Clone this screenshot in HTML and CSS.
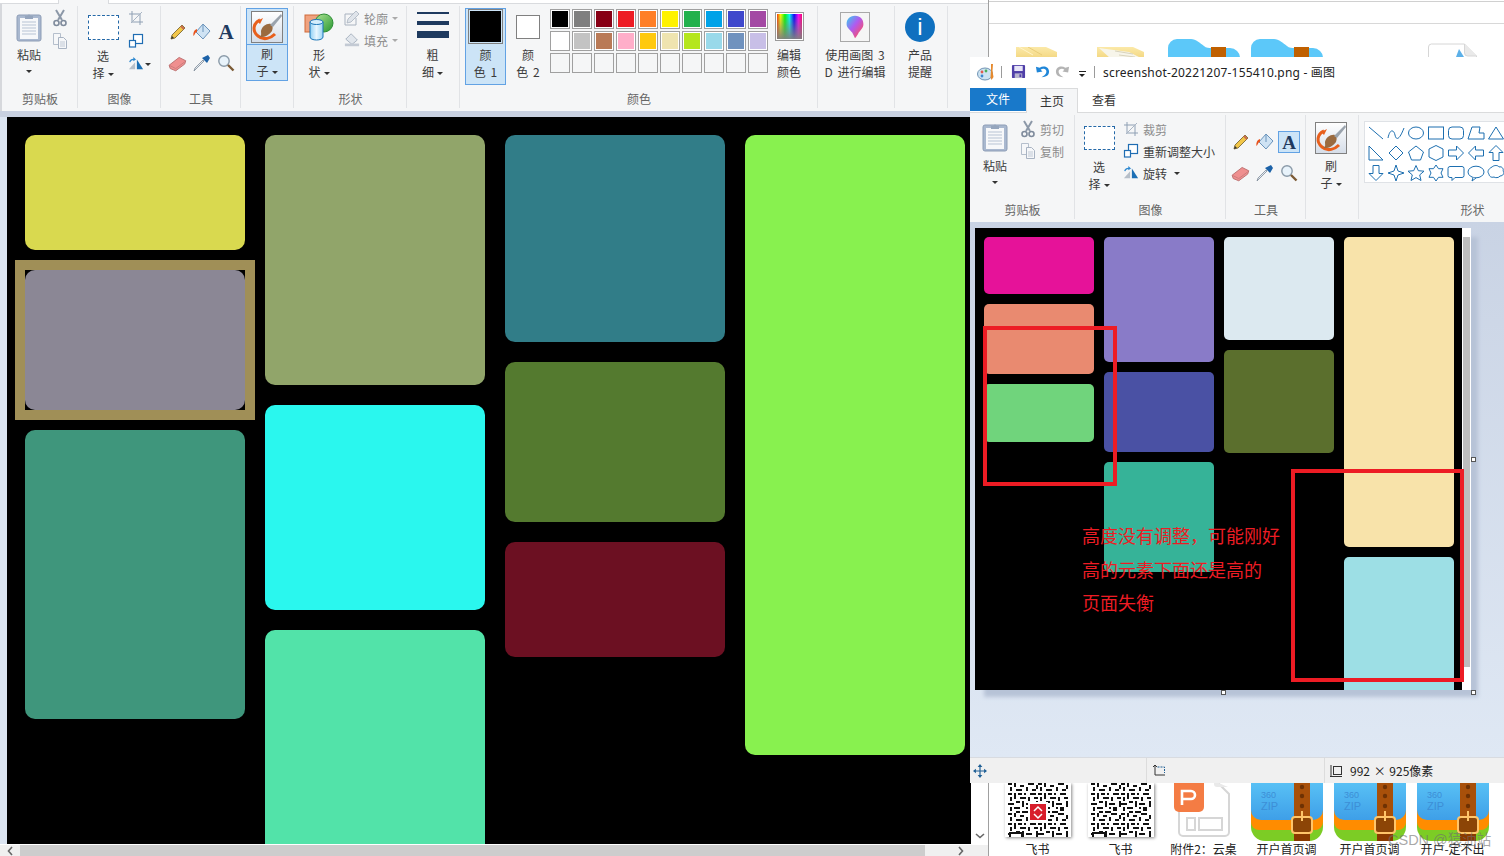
FILE: index.html
```html
<!DOCTYPE html>
<html lang="zh">
<head>
<meta charset="utf-8">
<title>画图</title>
<link rel="stylesheet" href="styles.css">
</head>
<body>
<svg class="defs" width="0" height="0">
  <defs>
    <linearGradient id="gPaper" x1="0" y1="0" x2="0" y2="1"><stop offset="0" stop-color="#fff"/><stop offset="1" stop-color="#d5dde8"/></linearGradient>
    <linearGradient id="gYellow" x1="0" y1="0" x2="0" y2="1"><stop offset="0" stop-color="#fbe9a8"/><stop offset="1" stop-color="#f3d67f"/></linearGradient>
    <linearGradient id="gCyl" x1="0" y1="0" x2="1" y2="0"><stop offset="0" stop-color="#8fd0f5"/><stop offset=".5" stop-color="#e8f6fe"/><stop offset="1" stop-color="#9bd4f4"/></linearGradient>
    <linearGradient id="gGreen" x1="0" y1="0" x2="1" y2="1"><stop offset="0" stop-color="#b0e596"/><stop offset="1" stop-color="#26962f"/></linearGradient>
    <linearGradient id="gDrop" x1="0" y1="0" x2="1" y2="1"><stop offset="0" stop-color="#2fd3f0"/><stop offset=".45" stop-color="#b05af0"/><stop offset=".8" stop-color="#f0507a"/><stop offset="1" stop-color="#f8a020"/></linearGradient>
    <linearGradient id="gZip" x1="0" y1="0" x2="0" y2="1"><stop offset="0" stop-color="#62cdfa"/><stop offset="1" stop-color="#3e9fe8"/></linearGradient>
    <pattern id="qrTile" width="30" height="30" patternUnits="userSpaceOnUse">
      <path d="M0 0h4v2H0zM6 0h2v4H6zM12 2h4v2h-4zM20 0h6v2h-6zM28 2h2v4h-2zM2 4h2v4H2zM8 6h6v2H8zM18 4h2v4h-2zM24 6h4v2h-4zM0 10h4v2H0zM6 10h2v6H6zM10 10h4v2h-4zM16 10h2v2h-2zM22 10h6v2h-6zM2 14h2v4H2zM12 14h6v2h-6zM20 14h2v4h-2zM26 14h4v2h-4zM0 20h6v2H0zM8 18h4v2H8zM14 18h2v6h-2zM18 20h6v2h-6zM28 18h2v6h-2zM2 24h2v4H2zM6 24h6v2H6zM18 24h2v2h-2zM22 24h4v4h-4zM8 28h4v2H8zM14 28h6v2h-6z" fill="#111"/>
    </pattern>

    <symbol id="i-paste" viewBox="0 0 26 30"><rect x="1" y="3" width="24" height="26" rx="2" fill="#a9b8cf" stroke="#8d9db6"/><rect x="4" y="6" width="18" height="21" fill="#f7f8fa"/><path d="M6 10h14M6 13h14M6 16h14M6 19h14M6 22h14" stroke="#b7c3d4"/><path d="M9 4h2.500a1.500 1.500 0 0 1 3 0H17v3H9z" fill="#95a5bd"/></symbol>
    <symbol id="i-cut" viewBox="0 0 16 18"><path d="M4 1l6 10M12 1L6 11" stroke="#8c98a8" stroke-width="2"/><circle cx="4.500" cy="14" r="2.500" fill="none" stroke="#7f8b9c" stroke-width="1.600"/><circle cx="11.500" cy="14" r="2.500" fill="none" stroke="#7f8b9c" stroke-width="1.600"/></symbol>
    <symbol id="i-copy" viewBox="0 0 16 18"><path d="M1.500 1.500h7v11h-7z" fill="#f6f7f9" stroke="#b5bfcc"/><path d="M6.500 5.500h5l3 3v8h-8z" fill="#f6f7f9" stroke="#a8b3c2"/><path d="M8 10h5M8 12h5M8 14h5" stroke="#c0c9d5"/></symbol>
    <symbol id="i-crop" viewBox="0 0 16 16"><path d="M4 1v11h11M1 4h11v11" fill="none" stroke="#8fa0b4"/><path d="M3 13L14 2" stroke="#a9b5c4"/></symbol>
    <symbol id="i-resize" viewBox="0 0 16 16"><rect x="5.500" y="1.500" width="9" height="9" fill="#fff" stroke="#1f6db3" stroke-width="1.200"/><rect x="1.500" y="7.500" width="6" height="6.500" fill="#fff" stroke="#1f6db3" stroke-width="1.200"/></symbol>
    <symbol id="i-rotate" viewBox="0 0 18 16"><path d="M1 14L8 6v8z" fill="#b6bfc9"/><path d="M10 3v11h7z" fill="#1b6fb5"/><path d="M2 6a4 4 0 0 1 5-3" fill="none" stroke="#2d88d0" stroke-width="1.500"/><path d="M6 0l3 3-3 2z" fill="#2d88d0"/></symbol>
    <symbol id="i-pencil" viewBox="0 0 18 18"><path d="M13 2l3 3L6 15l-4 1 1-4z" fill="#f2c648" stroke="#7d6a36" stroke-width=".9"/><path d="M12 3l3 3" stroke="#c76b50" stroke-width="2"/><path d="M2 16l1-3 2 2z" fill="#333"/></symbol>
    <symbol id="i-fill" viewBox="0 0 20 18"><path d="M11 1l7 7-7 8-7-7z" fill="#cfe3f4" stroke="#6b94bb"/><path d="M11 2v7" stroke="#6b94bb"/><path d="M5 6C2 7 1 10 1.500 13 3 12 3 9 5 9z" fill="#e8541d"/></symbol>
    <symbol id="i-a" viewBox="0 0 18 16"><text x="9" y="14.500" text-anchor="middle" class="serif-a">A</text></symbol>
    <symbol id="i-eraser" viewBox="0 0 18 16"><path d="M1 10L10 3l6 3-1 3-8 6-5-2z" fill="#ef8f8f" stroke="#b86a6a" stroke-width=".8"/><path d="M1 10l6 3 8-6" fill="none" stroke="#c97a7a" stroke-width=".8"/></symbol>
    <symbol id="i-picker" viewBox="0 0 18 18"><path d="M11 7l-8 8-2 2 1-3 8-8z" fill="#e4eaf0" stroke="#7d8a98" stroke-width=".8"/><path d="M9 4l5 5 3-5-2-3z" fill="#1c62a8"/></symbol>
    <symbol id="i-mag" viewBox="0 0 18 18"><circle cx="7" cy="7" r="5.200" fill="#e8f3fb" stroke="#8a9aa8" stroke-width="1.400"/><path d="M11 11l5.500 5.500" stroke="#7b5a35" stroke-width="2.400"/></symbol>
    <symbol id="i-brush" viewBox="0 0 32 32"><rect x=".5" y=".5" width="31" height="31" fill="url(#gPaper)" stroke="#808080"/><path d="M9 9C2 12 1 20 7 25s13 2 17-2" fill="none" stroke="#e85f1c" stroke-width="3"/><path d="M6 10l6-3-3 6z" fill="#e85f1c"/><path d="M10 20c1-5 6-8 10-7 2 1 2 4 1 7-3 4-8 7-13 6 3-1 2-3 2-6z" fill="#9a6a3f"/><path d="M19 14L30 3l1 2-9 11z" fill="#9aa3ad"/></symbol>
    <symbol id="i-shapes" viewBox="0 0 30 30"><rect x="1" y="3" width="16" height="17" fill="#f0a27f" stroke="#d06a3a"/><circle cx="20" cy="11" r="9" fill="url(#gGreen)" stroke="#2c8f35"/><path d="M6 10v15c0 4 13 4 13 0V10z" fill="url(#gCyl)" stroke="#1c76b8"/><ellipse cx="12.500" cy="10" rx="6.500" ry="2.500" fill="#d5eefc" stroke="#1c76b8"/></symbol>
    <symbol id="i-outline" viewBox="0 0 16 16"><path d="M1 15V4h8" fill="none" stroke="#a8b2bf"/><path d="M1 15h11V8" fill="none" stroke="#a8b2bf"/><path d="M12 1l3 3-8 8-4 1 1-4z" fill="#dfe4ea" stroke="#a8b2bf" stroke-width=".8"/></symbol>
    <symbol id="i-fillsm" viewBox="0 0 18 16"><path d="M8 1l7 7-6 5-7-6z" fill="#e1e6ec" stroke="#a4afbc"/><path d="M1 12h16v3H1z" fill="#c3cad4"/></symbol>
    <symbol id="i-save" viewBox="0 0 16 16"><rect x="1" y="1" width="14" height="14" rx="1" fill="#4f3fa8"/><rect x="3.500" y="2" width="9" height="5.500" fill="#e7e5f7"/><rect x="4" y="10" width="8" height="5" fill="#b9b6cf"/><rect x="9" y="11" width="2" height="3" fill="#4f3fa8"/></symbol>
    <symbol id="i-undo" viewBox="0 0 16 16"><path d="M1 3l1 6 6-1-2-2c3-2 7 0 6 3-.5 2-3 4-5 5 5 0 8-2 8-6 0-5-6-7-10-4z" fill="#1f86d8"/></symbol>
    <symbol id="i-appicon" viewBox="0 0 18 18"><ellipse cx="8" cy="11" rx="7.500" ry="6" fill="#cde3f2" stroke="#6f93b3"/><circle cx="5" cy="9" r="1.400" fill="#e25b4f"/><circle cx="9" cy="8" r="1.400" fill="#4dae58"/><circle cx="5" cy="13" r="1.400" fill="#3c89d0"/><path d="M14 1h2l-.5 7 1 6-2 3-1-3 .5-6z" fill="#e68a2e"/></symbol>
    <symbol id="i-move" viewBox="0 0 12 12"><path d="M6 0l2 2.500H6.500v3h3V4L12 6 9.500 8V6.500h-3v3H8L6 12 4 9.500h1.500v-3h-3V8L0 6l2.500-2v1.500h3v-3H4z" fill="#1f5f95"/></symbol>
    <symbol id="i-selsize" viewBox="0 0 14 14"><path d="M3 1v10h10" fill="none" stroke="#333"/><path d="M5.500 3h7v6" fill="none" stroke="#1f5f95" stroke-dasharray="2 1"/><path d="M1 3l2-2 2 2" fill="none" stroke="#333"/></symbol>
    <symbol id="i-imgsize" viewBox="0 0 14 14"><rect x="4.500" y="2.500" width="8" height="8" fill="none" stroke="#333"/><path d="M2 1v12M1 12.500h12" stroke="#333"/></symbol>
    <symbol id="i-chev-l" viewBox="0 0 8 10"><path d="M6 1L2.500 5 6 9" fill="none" stroke="#666" stroke-width="1.600"/></symbol>
    <symbol id="i-chev-r" viewBox="0 0 8 10"><path d="M2 1l3.500 4L2 9" fill="none" stroke="#666" stroke-width="1.600"/></symbol>
    <symbol id="i-chev-d" viewBox="0 0 10 8"><path d="M1 2l4 3.500L9 2" fill="none" stroke="#666" stroke-width="1.600"/></symbol>

    <symbol id="s-line" viewBox="0 0 18 18"><path d="M2 3l14 12"/></symbol>
    <symbol id="s-curve" viewBox="0 0 18 18"><path d="M1 14c2-10 6-8 7-3s4 6 9-7"/></symbol>
    <symbol id="s-oval" viewBox="0 0 18 18"><ellipse cx="9" cy="9" rx="7.500" ry="6"/></symbol>
    <symbol id="s-rect" viewBox="0 0 18 18"><rect x="1.500" y="3" width="15" height="12"/></symbol>
    <symbol id="s-rrect" viewBox="0 0 18 18"><rect x="1.500" y="3" width="15" height="12" rx="3.500"/></symbol>
    <symbol id="s-poly" viewBox="0 0 18 18"><path d="M1 15L5 3h8l-1 6h5v6z"/></symbol>
    <symbol id="s-tri" viewBox="0 0 18 18"><path d="M9 3l7.500 12h-15z"/></symbol>
    <symbol id="s-rtri" viewBox="0 0 18 18"><path d="M2 2v14h14z"/></symbol>
    <symbol id="s-dia" viewBox="0 0 18 18"><path d="M9 2l7 7-7 7-7-7z"/></symbol>
    <symbol id="s-pent" viewBox="0 0 18 18"><path d="M9 2l7.500 6-3 8h-9l-3-8z"/></symbol>
    <symbol id="s-hex" viewBox="0 0 18 18"><path d="M9 1.500l7 3.500v8l-7 3.500L2 13V5z"/></symbol>
    <symbol id="s-ar" viewBox="0 0 18 18"><path d="M1.500 6h8V2l7 7-7 7v-4h-8z"/></symbol>
    <symbol id="s-al" viewBox="0 0 18 18"><path d="M16.500 6h-8V2l-7 7 7 7v-4h8z"/></symbol>
    <symbol id="s-au" viewBox="0 0 18 18"><path d="M6 16.500v-8H2l7-7 7 7h-4v8z"/></symbol>
    <symbol id="s-ad" viewBox="0 0 18 18"><path d="M6 1.500v8H2l7 7 7-7h-4v-8z"/></symbol>
    <symbol id="s-s4" viewBox="0 0 18 18"><path d="M9 1l2 6 6 2-6 2-2 6-2-6-6-2 6-2z"/></symbol>
    <symbol id="s-s5" viewBox="0 0 18 18"><path d="M9 1.500l2.300 5.200 5.700.5-4.300 3.700 1.300 5.600L9 13.600l-5 2.900 1.300-5.600L1 7.200l5.700-.5z"/></symbol>
    <symbol id="s-s6" viewBox="0 0 18 18"><path d="M9 1l2.500 3.700H16l-2 4.300 2 4.300h-4.500L9 17l-2.500-3.700H2L4 9 2 4.700h4.500z"/></symbol>
    <symbol id="s-cr" viewBox="0 0 18 18"><path d="M3 2.500h12a2 2 0 0 1 2 2v7a2 2 0 0 1-2 2H8l-3 3v-3H3a2 2 0 0 1-2-2v-7a2 2 0 0 1 2-2z"/></symbol>
    <symbol id="s-co" viewBox="0 0 18 18"><ellipse cx="9" cy="8" rx="8" ry="5.800"/><path d="M6 13.500L5 17l4-3"/></symbol>
    <symbol id="s-cc" viewBox="0 0 18 18"><path d="M5 3c2-2 6-2 7 0 3-1 5 2 4 4 2 2 0 5-3 5-1 2-5 2-6 1-3 1-5-1-5-3-2-2-1-5 3-7z"/></symbol>

    <symbol id="f-manila" viewBox="0 0 44 12"><path d="M0 0h30l11 5v7H0z" fill="url(#gYellow)"/><path d="M3 0l14 8" stroke="#fff3c8"/><path d="M12 0l14 8" stroke="#e8cc78"/></symbol>
    <symbol id="f-manila2" viewBox="0 0 48 12"><path d="M0 0h36l11 5v7H0z" fill="url(#gYellow)"/><path d="M2 1l30 4 14 7H14z" fill="#f7f5ea"/><path d="M18 4l18 3M22 8l16 2" stroke="#d8d3bc"/></symbol>
    <symbol id="f-blue" viewBox="0 0 72 20"><path d="M0 20V9a9 9 0 0 1 9-9h14c5 0 9 4 13 7 2 2 5 2 8 2h18a10 10 0 0 1 10 10v1z" fill="#5cc8f9"/><rect x="43" y="8" width="15" height="12" fill="#c06000"/></symbol>
    <symbol id="f-doc" viewBox="0 0 49 14"><path d="M.5 14V4a3 3 0 0 1 3-3h33l12 12v1" fill="#fff" stroke="#d6d6d6"/><path d="M36.500 1v9a3 3 0 0 0 3 3h9" fill="#e9e9e9" stroke="#d6d6d6"/><path d="M28 14l3-8 5 8z" fill="#5cb0e8"/></symbol>
    <symbol id="f-zip" viewBox="0 0 72 72"><path d="M0 14a14 14 0 0 1 14-14h44a14 14 0 0 1 14 14v44a14 14 0 0 1-14 14H14A14 14 0 0 1 0 58z" fill="#7ccc25"/><path d="M0 14a14 14 0 0 1 14-14h44a14 14 0 0 1 14 14v39a8 8 0 0 1-8 8H8a8 8 0 0 1-8-8z" fill="#ff8c00"/><path d="M0 14a14 14 0 0 1 14-14h44a14 14 0 0 1 14 14v27a10 10 0 0 1-10 10H10A10 10 0 0 1 0 41z" fill="url(#gZip)"/><text x="10" y="29" class="zip-a">360</text><text x="10" y="41" class="zip-b">ZIP</text><rect x="43" width="16" height="72" fill="#a8500a"/><rect x="43" y="60" width="16" height="12" fill="#8a3a00"/><circle cx="51" cy="18" r="2.200" fill="#6e3204"/><circle cx="51" cy="27" r="2.200" fill="#6e3204"/><circle cx="51" cy="37" r="2.200" fill="#6e3204"/><rect x="41" y="48" width="20" height="16" rx="3" fill="#8c4506" stroke="#ffc56a" stroke-width="2"/><path d="M51 42v10" stroke="#ffc56a" stroke-width="2"/></symbol>
    <symbol id="f-ppt" viewBox="0 0 56 54"><path d="M5 -4h35l15 15v38a4 4 0 0 1-4 4H9a4 4 0 0 1-4-4z" fill="#fff" stroke="#d6d6d6" stroke-width="2"/><path d="M40 -2v3a3 3 0 0 0 3 3h11" fill="#e9e9e9"/><path d="M0 -6h30v30a5 5 0 0 1-5 5H5a5 5 0 0 1-5-5z" fill="#f47c44"/><path d="M8 22V8h9a4 4 0 0 1 0 8H8" fill="none" stroke="#fff" stroke-width="2.600"/><rect x="13" y="35" width="8" height="12" fill="none" stroke="#d6d6d6" stroke-width="2"/><rect x="25" y="35" width="23" height="12" fill="none" stroke="#d6d6d6" stroke-width="2"/></symbol>
  </defs>
</svg>

<main class="desktop">

  <section class="explorer">
    <div class="exp-top"></div>
    <div class="exp-addr"></div>
    <div class="exp-row exp-row-top">
      <div class="exp-cell"><svg class="folder-manila"><use href="#f-manila"/></svg></div>
      <div class="exp-cell"><svg class="folder-manila f2"><use href="#f-manila2"/></svg></div>
      <div class="exp-cell"><svg class="folder-blue"><use href="#f-blue"/></svg></div>
      <div class="exp-cell"><svg class="folder-blue"><use href="#f-blue"/></svg></div>
      <div class="exp-cell"></div>
      <div class="exp-cell"><svg class="doc-top"><use href="#f-doc"/></svg></div>
    </div>
    <div class="exp-row exp-row-bottom">
      <figure class="exp-item">
        <div class="qr"><svg viewBox="0 0 60 66"><rect width="60" height="66" fill="url(#qrTile)"/><rect x="2" y="50" width="12" height="12" fill="#fff" stroke="#111" stroke-width="2"/><rect x="6" y="54" width="4" height="4" fill="#111"/><rect x="20" y="19" width="20" height="20" fill="#fff"/><rect x="22" y="21" width="16" height="16" fill="#d81e2c"/><path d="M26 28l4-4 4 4M26 31l4 4 4-4" stroke="#fff" fill="none" stroke-width="1.500"/></svg></div>
        <figcaption>飞书</figcaption>
      </figure>
      <figure class="exp-item">
        <div class="qr"><svg viewBox="0 0 60 66"><rect width="60" height="66" fill="url(#qrTile)"/><rect x="2" y="50" width="12" height="12" fill="#fff" stroke="#111" stroke-width="2"/><rect x="6" y="54" width="4" height="4" fill="#111"/></svg></div>
        <figcaption>飞书</figcaption>
      </figure>
      <figure class="exp-item"><svg class="ppt"><use href="#f-ppt"/></svg><figcaption>附件2：云桌</figcaption></figure>
      <figure class="exp-item"><svg class="zip"><use href="#f-zip"/></svg><figcaption>开户首页调</figcaption></figure>
      <figure class="exp-item"><svg class="zip"><use href="#f-zip"/></svg><figcaption>开户首页调</figcaption></figure>
      <figure class="exp-item"><svg class="zip"><use href="#f-zip"/></svg><figcaption>开户-定不出</figcaption></figure>
    </div>
    <div class="watermark">CSDN @猿油站</div>
  </section>

  <section class="paint-left">
    <div class="tabstrip"><span class="tabline tabline-a"></span><span class="tabgap"></span><span class="tabline tabline-b"></span></div>
    <div class="ribbon ribbon-left">
      <div class="group g-clip">
        <div class="gbody">
          <div class="big w-paste"><svg class="ic-paste"><use href="#i-paste"/></svg><span class="lbl">粘贴</span><span class="lbl"><i class="caret caret-solo"></i></span></div>
          <div class="stack pad-stack"><svg class="ic16"><use href="#i-cut"/></svg><svg class="ic16"><use href="#i-copy"/></svg></div>
        </div>
        <div class="glabel">剪贴板</div>
      </div>
      <div class="group g-img">
        <div class="gbody">
          <div class="big w-select"><div class="dash"></div><span class="lbl">选</span><span class="lbl">择<i class="caret"></i></span></div>
          <div class="stack"><svg class="ic16"><use href="#i-crop"/></svg><svg class="ic16"><use href="#i-resize"/></svg><span class="rot"><svg class="ic16"><use href="#i-rotate"/></svg><i class="caret"></i></span></div>
        </div>
        <div class="glabel">图像</div>
      </div>
      <div class="group g-tools">
        <div class="gbody tools-body">
          <div class="toolgrid">
            <svg class="ic-tool"><use href="#i-pencil"/></svg><svg class="ic-tool"><use href="#i-fill"/></svg><svg class="ic-tool"><use href="#i-a"/></svg>
            <svg class="ic-tool"><use href="#i-eraser"/></svg><svg class="ic-tool"><use href="#i-picker"/></svg><svg class="ic-tool"><use href="#i-mag"/></svg>
          </div>
        </div>
        <div class="glabel">工具</div>
      </div>
      <div class="group g-brush">
        <div class="gbody">
          <div class="brush-on"><svg class="ic-brush"><use href="#i-brush"/></svg><span class="lbl brush-lbl">刷</span><span class="lbl">子<i class="caret"></i></span></div>
        </div>
        <div class="glabel"></div>
      </div>
      <div class="group g-shape">
        <div class="gbody">
          <div class="big w-shape"><svg class="ic-shapes"><use href="#i-shapes"/></svg><span class="lbl">形</span><span class="lbl">状<i class="caret"></i></span></div>
          <div class="shape-opts">
            <div class="opt"><svg class="ic16"><use href="#i-outline"/></svg><span>轮廓</span><i class="caret caret-gray"></i></div>
            <div class="opt"><svg class="ic16"><use href="#i-fillsm"/></svg><span>填充</span><i class="caret caret-gray"></i></div>
          </div>
        </div>
        <div class="glabel">形状</div>
      </div>
      <div class="group g-thick">
        <div class="gbody">
          <div class="big w-thick"><div class="thick"><span class="t1"></span><span class="t2"></span><span class="t3"></span></div><span class="lbl">粗</span><span class="lbl">细<i class="caret"></i></span></div>
        </div>
        <div class="glabel"></div>
      </div>
      <div class="group g-color">
        <div class="gbody">
          <div class="color1"><span class="sw1"></span><span class="lbl">颜</span><span class="lbl spaced">色 1</span></div>
          <div class="color2"><span class="sw2"></span><span class="lbl">颜</span><span class="lbl spaced">色 2</span></div>
          <div class="palette">
            <i class="c c1"></i><i class="c c2"></i><i class="c c3"></i><i class="c c4"></i><i class="c c5"></i><i class="c c6"></i><i class="c c7"></i><i class="c c8"></i><i class="c c9"></i><i class="c c10"></i>
            <i class="c c11"></i><i class="c c12"></i><i class="c c13"></i><i class="c c14"></i><i class="c c15"></i><i class="c c16"></i><i class="c c17"></i><i class="c c18"></i><i class="c c19"></i><i class="c c20"></i>
            <i class="c"></i><i class="c"></i><i class="c"></i><i class="c"></i><i class="c"></i><i class="c"></i><i class="c"></i><i class="c"></i><i class="c"></i><i class="c"></i>
          </div>
          <div class="edit"><span class="rainbow"></span><span class="lbl">编辑</span><span class="lbl">颜色</span></div>
        </div>
        <div class="glabel">颜色</div>
      </div>
      <div class="group g-3d">
        <div class="gbody">
          <div class="big w-3d"><div class="p3d"><svg viewBox="0 0 30 30"><path d="M15 3c6 0 9 4 9 9 0 4-3 6-5 9-1 2-2 4-4 6-1-2-2-4-3-6-2-3-6-5-6-9 0-5 3-9 9-9z" fill="url(#gDrop)"/></svg></div><span class="lbl spaced">使用画图 3</span><span class="lbl spaced">D 进行编辑</span></div>
        </div>
        <div class="glabel"></div>
      </div>
      <div class="group g-info">
        <div class="gbody">
          <div class="big w-info"><div class="info">i</div><span class="lbl">产品</span><span class="lbl">提醒</span></div>
        </div>
        <div class="glabel"></div>
      </div>
      <div class="group-rest"></div>
    </div>
    <div class="edgebar"></div>
    <div class="work-left">
      <div class="gutter"></div>
      <div class="canvas-l">
        <div class="col">
          <div class="tile h115 k-yellow"></div>
          <div class="selection"><div class="tile h140 k-gray"></div></div>
          <div class="tile h289 k-teal"></div>
        </div>
        <div class="col">
          <div class="tile h250 k-olive"></div>
          <div class="tile h205 k-cyan"></div>
          <div class="tile h240 k-mint"></div>
        </div>
        <div class="col">
          <div class="tile h207 k-petrol"></div>
          <div class="tile h160 k-green"></div>
          <div class="tile h115 k-maroon"></div>
        </div>
        <div class="col">
          <div class="tile h620 k-lime"></div>
        </div>
      </div>
      <div class="vscroll"><svg class="vchev"><use href="#i-chev-d"/></svg></div>
    </div>
    <div class="hscroll">
      <svg class="chev"><use href="#i-chev-l"/></svg><div class="thumb"></div><svg class="chev chev-r"><use href="#i-chev-r"/></svg>
    </div>
  </section>

  <section class="paint-right">
    <div class="titlebar">
      <svg class="tb-app"><use href="#i-appicon"/></svg>
      <span class="tb-sep"></span>
      <svg class="tb-ic"><use href="#i-save"/></svg>
      <svg class="tb-ic tb-undo"><use href="#i-undo"/></svg>
      <svg class="tb-ic tb-redo"><use href="#i-undo"/></svg>
      <span class="tb-drop"></span>
      <span class="tb-sep tb-sep2"></span>
      <span class="tb-title">screenshot-20221207-155410.png - 画图</span>
    </div>
    <div class="tabs-r">
      <span class="tab-file">文件</span>
      <span class="tab-home">主页</span>
      <span class="tab-view">查看</span>
    </div>
    <div class="ribbon ribbon-right">
      <div class="group rg-clip">
        <div class="gbody">
          <div class="big rw-paste"><svg class="ic-paste"><use href="#i-paste"/></svg><span class="lbl">粘贴</span><span class="lbl"><i class="caret caret-solo"></i></span></div>
          <div class="stack-text">
            <div class="opt"><svg class="ic16"><use href="#i-cut"/></svg><span>剪切</span></div>
            <div class="opt"><svg class="ic16"><use href="#i-copy"/></svg><span>复制</span></div>
          </div>
        </div>
        <div class="glabel">剪贴板</div>
      </div>
      <div class="group rg-img">
        <div class="gbody">
          <div class="big rw-select"><div class="dash"></div><span class="lbl">选</span><span class="lbl">择<i class="caret"></i></span></div>
          <div class="stack-text">
            <div class="opt"><svg class="ic16"><use href="#i-crop"/></svg><span>裁剪</span></div>
            <div class="opt on"><svg class="ic16"><use href="#i-resize"/></svg><span>重新调整大小</span></div>
            <div class="opt on"><svg class="ic16"><use href="#i-rotate"/></svg><span>旋转</span><i class="caret"></i></div>
          </div>
        </div>
        <div class="glabel">图像</div>
      </div>
      <div class="group rg-tools">
        <div class="gbody rtools-body">
          <div class="toolgrid">
            <svg class="ic-tool"><use href="#i-pencil"/></svg><svg class="ic-tool"><use href="#i-fill"/></svg><span class="a-on"><svg class="ic-tool"><use href="#i-a"/></svg></span>
            <svg class="ic-tool"><use href="#i-eraser"/></svg><svg class="ic-tool"><use href="#i-picker"/></svg><svg class="ic-tool"><use href="#i-mag"/></svg>
          </div>
        </div>
        <div class="glabel">工具</div>
      </div>
      <div class="group rg-brush">
        <div class="gbody">
          <div class="big rw-brush"><svg class="ic-brush"><use href="#i-brush"/></svg><span class="lbl">刷</span><span class="lbl">子<i class="caret"></i></span></div>
        </div>
        <div class="glabel"></div>
      </div>
      <div class="group rg-shape">
        <div class="gbody rshape-body">
          <div class="gallery">
            <svg><use href="#s-line"/></svg><svg><use href="#s-curve"/></svg><svg><use href="#s-oval"/></svg><svg><use href="#s-rect"/></svg><svg><use href="#s-rrect"/></svg><svg><use href="#s-poly"/></svg><svg><use href="#s-tri"/></svg>
            <svg><use href="#s-rtri"/></svg><svg><use href="#s-dia"/></svg><svg><use href="#s-pent"/></svg><svg><use href="#s-hex"/></svg><svg><use href="#s-ar"/></svg><svg><use href="#s-al"/></svg><svg><use href="#s-au"/></svg>
            <svg><use href="#s-ad"/></svg><svg><use href="#s-s4"/></svg><svg><use href="#s-s5"/></svg><svg><use href="#s-s6"/></svg><svg><use href="#s-cr"/></svg><svg><use href="#s-co"/></svg><svg><use href="#s-cc"/></svg>
          </div>
        </div>
        <div class="glabel rshape-label">形状</div>
      </div>
    </div>
    <div class="work-right">
      <div class="canvas-wrap">
        <div class="canvas-r">
          <div class="col-r">
            <div class="mt h57 m-pink"></div>
            <div class="mt h70 m-salmon"></div>
            <div class="mt h58 m-lgreen"></div>
          </div>
          <div class="col-r">
            <div class="mt h125 m-purple"></div>
            <div class="mt h80 m-indigo"></div>
            <div class="mt h110 m-sea"></div>
          </div>
          <div class="col-r">
            <div class="mt h103 m-ice"></div>
            <div class="mt h103 m-moss"></div>
          </div>
          <div class="col-r">
            <div class="mt h310 m-cream"></div>
            <div class="mt h140 m-aqua"></div>
          </div>
        </div>
        <div class="vs-r"><span class="vs-thumb"></span></div>
        <div class="redbox box-a"></div>
        <div class="redbox box-b"></div>
        <p class="note">高度没有调整，可能刚好<br>高的元素下面还是高的<br>页面失衡</p>
        <span class="handle h-r"></span>
        <span class="handle h-b"></span>
        <span class="handle h-c"></span>
      </div>
    </div>
    <div class="status">
      <div class="st st-1"><svg class="st-ic"><use href="#i-move"/></svg></div>
      <div class="st st-2"><svg class="st-ic"><use href="#i-selsize"/></svg></div>
      <div class="st st-3"><svg class="st-ic"><use href="#i-imgsize"/></svg><span class="st-text">992 × 925像素</span></div>
    </div>
  </section>
</main>
</body>
</html>
```

FILE: styles.css
```css
* { box-sizing: border-box; }
html, body { margin: 0; padding: 0; width: 1504px; height: 856px; overflow: hidden; background: #fff; }
body { font-family: "Noto Sans CJK SC", "Noto Sans", sans-serif; font-size: 12px; color: #3c3c3c; }
.defs { position: absolute; }
svg { display: block; }
i { font-style: normal; }
.serif-a { font-family: "Liberation Serif", serif; font-weight: 700; font-size: 19px; fill: #1f3a5f; }
.zip-a { font-family: "Liberation Sans", sans-serif; font-size: 9px; fill: #3d8ed6; }
.zip-b { font-family: "Liberation Sans", sans-serif; font-size: 11px; fill: #3d8ed6; }

.desktop { position: relative; width: 1504px; height: 856px; overflow: hidden; }

/* explorer behind */
.explorer { position: absolute; left: 988px; top: 0; width: 516px; height: 856px; background: #fff; border-left: 1px solid #a0a0a0; display: flex; flex-direction: column; }
.exp-top { height: 2px; border-bottom: 1px solid #d0d0d0; }
.exp-addr { height: 22px; border-bottom: 1px solid #d8d8d8; }
.exp-row { display: flex; padding-left: 7px; }
.exp-row-top { height: 33px; overflow: hidden; }
.exp-row-bottom { margin-top: auto; height: 73px; }
.exp-cell { width: 83px; display: flex; justify-content: center; flex: none; }
.folder-manila { width: 44px; height: 12px; margin-top: 23px; flex: none; }
.folder-manila.f2 { width: 48px; }
.folder-blue { width: 72px; height: 20px; margin-top: 15px; flex: none; }
.doc-top { width: 49px; height: 14px; margin-top: 19px; flex: none; }
.exp-item { margin: 0; width: 83px; flex: none; height: 73px; display: flex; flex-direction: column; align-items: center; position: relative; }
.exp-item figcaption { position: absolute; top: 57px; left: 0; width: 83px; text-align: center; font-size: 12px; line-height: 18px; color: #222; white-space: nowrap; overflow: hidden; }
.qr { width: 66px; height: 54px; padding: 0 3px; background: #fff; box-shadow: 1px 1px 3px #888; overflow: hidden; flex: none; }
.zip { width: 72px; height: 72px; margin-top: -14px; flex: none; }
.ppt { width: 56px; height: 54px; flex: none; margin-left: -4px; }
.watermark { position: absolute; left: 399px; top: 828px; font: 14.5px "Liberation Sans", "Noto Sans CJK SC", sans-serif; color: rgba(110, 110, 110, .6); white-space: nowrap; }

/* left paint window */
.paint-left { position: absolute; left: 0; top: 0; width: 988px; height: 856px; display: flex; flex-direction: column; background: #f0f0f0; }
.tabstrip { height: 4px; display: flex; background: #fff; }
.tabline { border-bottom: 1px solid #d9dbde; }
.tabline-a { width: 58px; }
.tabgap { width: 51px; background: #f5f6f7; border-left: 1px solid #d9dbde; border-right: 1px solid #d9dbde; }
.tabline-b { flex: 1; }
.ribbon { display: flex; background: #f5f6f7; }
.ribbon-left { height: 107px; border-left: 2px solid #d6d8dc; }
.group { display: flex; flex-direction: column; flex: none; position: relative; }
.group::after { content: ""; position: absolute; right: 0; top: 2px; bottom: 3px; width: 1px; background: #e1e3e6; }
.gbody { height: 87px; display: flex; }
.glabel { flex: 1; text-align: center; color: #666; line-height: 16px; font-size: 12px; }
.group-rest { flex: 1; }
.lbl { display: block; line-height: 17px; height: 17px; color: #3c3c3c; white-space: nowrap; text-align: center; }
.spaced { word-spacing: 2px; }
.caret { display: inline-block; width: 0; height: 0; margin-left: 3px; vertical-align: 2px; border-left: 3px solid transparent; border-right: 3px solid transparent; border-top: 3px solid #333; }
.caret-solo { vertical-align: 4px; margin-left: 0; }
.caret-gray { border-top-color: #aaa; margin-left: 0; }
.big { display: flex; flex-direction: column; align-items: center; flex: none; }
.ic16 { width: 16px; height: 18px; flex: none; }
.stack { display: flex; flex-direction: column; gap: 5px; padding-top: 5px; }
.rot { display: flex; align-items: center; width: 24px; }
.rot .caret { margin-left: 1px; }
.g-clip { width: 76px; }
.g-img { width: 83px; }
.g-tools { width: 80px; }
.g-brush { width: 53px; }
.g-shape { width: 113px; }
.g-thick { width: 53px; }
.g-color { width: 358px; }
.g-3d { width: 77px; }
.g-info { width: 53px; }
.w-paste { width: 50px; padding: 8px 0 0 4px; }
.ic-paste { width: 26px; height: 30px; margin-bottom: 4px; flex: none; }
.w-select { width: 50px; padding-top: 11px; }
.dash { width: 31px; height: 25px; border: 1px dashed #2569a8; background: #fff; margin-bottom: 7px; flex: none; }
.tools-body { padding: 19px 0 0 5px; }
.toolgrid { display: grid; grid-template-columns: repeat(3, 24px); grid-auto-rows: 31px; justify-items: center; }
.ic-tool { width: 20px; height: 18px; }
.brush-on { margin: 4px 0 0 5px; width: 42px; height: 73px; border: 1px solid #62a2e4; background: #cce4f7; display: flex; flex-direction: column; align-items: center; padding-top: 2px; }
.ic-brush { width: 32px; height: 32px; margin-bottom: 1px; flex: none; }
.brush-lbl { border-top: 1px solid #62a2e4; width: 100%; height: 18px; }
.w-shape { width: 50px; padding-top: 8px; }
.ic-shapes { width: 30px; height: 30px; margin-bottom: 4px; flex: none; }
.shape-opts { display: flex; flex-direction: column; gap: 4px; padding-top: 5px; }
.opt { display: flex; align-items: center; height: 18px; gap: 4px; color: #8d8d8d; white-space: nowrap; }
.opt.on { color: #3c3c3c; }
.w-thick { width: 51px; padding-top: 8px; }
.thick { width: 32px; height: 26px; margin-bottom: 8px; display: flex; flex-direction: column; justify-content: space-between; flex: none; }
.thick span { display: block; background: #1e3a5f; }
.t1 { height: 2px; }
.t2 { height: 4px; }
.t3 { height: 7px; }
.color1 { margin: 4px 0 0 5px; width: 41px; height: 77px; background: #cce4f7; border: 1px solid #62a2e4; display: flex; flex-direction: column; align-items: center; padding-top: 2px; }
.sw1 { width: 31px; height: 31px; background: #000; outline: 1px solid #808080; outline-offset: 1px; margin-bottom: 4px; flex: none; }
.color2 { width: 44px; margin-top: 4px; padding-top: 7px; display: flex; flex-direction: column; align-items: center; }
.sw2 { width: 24px; height: 24px; background: #fff; border: 1px solid #808080; margin-bottom: 7px; flex: none; }
.palette { margin-top: 5px; display: grid; grid-template-columns: repeat(10, 20px); grid-auto-rows: 20px; gap: 2px; height: 64px; }
.c { display: block; border: 1px solid #a0a0a0; background: #f5f6f7; }
.c1,.c2,.c3,.c4,.c5,.c6,.c7,.c8,.c9,.c10,.c11,.c12,.c13,.c14,.c15,.c16,.c17,.c18,.c19,.c20 { box-shadow: inset 0 0 0 1px #fff; }
.c1 { background: #000; } .c2 { background: #7f7f7f; } .c3 { background: #880015; } .c4 { background: #ed1c24; } .c5 { background: #ff7f27; }
.c6 { background: #fff200; } .c7 { background: #22b14c; } .c8 { background: #00a2e8; } .c9 { background: #3f48cc; } .c10 { background: #a349a4; }
.c11 { background: #fff; } .c12 { background: #c3c3c3; } .c13 { background: #b97a57; } .c14 { background: #ffaec9; } .c15 { background: #ffc90e; }
.c16 { background: #efe4b0; } .c17 { background: #b5e61d; } .c18 { background: #99d9ea; } .c19 { background: #7092be; } .c20 { background: #c8bfe7; }
.edit { margin: 8px 0 0 6px; width: 30px; display: flex; flex-direction: column; align-items: center; }
.rainbow { width: 29px; height: 29px; flex: none; border: 1px solid #9a9a9a; outline: 1px solid #fff; outline-offset: -2px; background: linear-gradient(transparent, #808080), linear-gradient(90deg, #f00, #ff0 17%, #0f0 33%, #0ff 50%, #00f 67%, #f0f 83%, #f04); margin-bottom: 5px; }
.w-3d { width: 74px; padding-top: 8px; }
.p3d { width: 30px; height: 30px; background: #f5f5f5; border: 1px solid #a8a8a8; margin-bottom: 4px; flex: none; }
.w-info { width: 50px; padding-top: 8px; }
.info { width: 30px; height: 30px; flex: none; margin-bottom: 4px; border-radius: 50%; background: #0f70bf; color: #fff; font: 400 24px/30px "Liberation Sans", sans-serif; text-align: center; }

.edgebar { height: 6px; background: #c8d0e0; }
.work-left { flex: 1; display: flex; min-height: 0; }
.gutter { width: 7px; background: #dbe4f1; }
.canvas-l { width: 964px; background: #000; padding: 18px 0 0 18px; display: flex; gap: 20px; overflow: hidden; }
.col { width: 220px; flex: none; display: flex; flex-direction: column; gap: 20px; }
.tile { border-radius: 10px; flex: none; }
.selection { margin: -10px -10px; border: 10px solid #a08f57; background: #000; flex: none; }
.h115 { height: 115px; } .h140 { height: 140px; } .h289 { height: 289px; } .h250 { height: 250px; } .h205 { height: 205px; } .h240 { height: 240px; }
.h207 { height: 207px; } .h160 { height: 160px; } .h620 { height: 620px; }
.k-yellow { background: #d9d94f; } .k-gray { background: #8b8795; } .k-teal { background: #3f967c; } .k-olive { background: #91a56a; } .k-cyan { background: #2af7ee; }
.k-mint { background: #52e3a9; } .k-petrol { background: #317d88; } .k-green { background: #547a2f; } .k-maroon { background: #6c1022; } .k-lime { background: #88f14f; }
.vscroll { flex: 1; background: #fff; display: flex; align-items: flex-end; justify-content: center; padding: 0 0 4px 1px; }
.vchev { width: 10px; height: 8px; }
.hscroll { height: 12px; background: #f0f0f0; display: flex; align-items: center; border-top: 1px solid #fff; }
.chev { width: 8px; height: 10px; margin-left: 6px; margin-right: 6px; flex: none; }
.chev-r { margin-left: 32px; }
.thumb { width: 905px; height: 11px; background: #cdcdcd; flex: none; }

/* right paint window */
.paint-right { position: absolute; left: 970px; top: 57px; width: 534px; height: 726px; display: flex; flex-direction: column; background: #fff; }
.titlebar { height: 31px; display: flex; align-items: center; background: #fff; padding: 0 0 2px 7px; flex: none; }
.tb-app { width: 18px; height: 18px; }
.tb-sep { width: 1px; height: 12px; background: #9a9a9a; margin: 0 9px 0 6px; }
.tb-ic { width: 15px; height: 15px; margin-right: 9px; }
.tb-undo { margin-right: 5px; }
.tb-redo { transform: scaleX(-1); filter: grayscale(1) opacity(.55); margin-right: 9px; }
.tb-drop { width: 7px; height: 5px; border-top: 1px solid #222; position: relative; margin-top: 3px; }
.tb-drop::after { content: ""; position: absolute; left: 0; top: 2px; border-left: 3.5px solid transparent; border-right: 3.5px solid transparent; border-top: 3px solid #222; }
.tb-sep2 { margin: 0 8px 0 8px; }
.tb-title { font-size: 12px; letter-spacing: .2px; color: #222; white-space: nowrap; font-family: "Noto Sans", "Noto Sans CJK SC", sans-serif; }
.tabs-r { height: 25px; display: flex; flex: none; background: #fff; border-bottom: 1px solid #dadbdc; }
.tab-file { width: 56px; height: 23px; background: #1979ca; color: #fff; text-align: center; line-height: 22px; }
.tab-home { width: 52px; height: 25px; background: #f5f6f7; border: 1px solid #dadbdc; border-bottom: 0; text-align: center; line-height: 24px; color: #333; }
.tab-view { width: 52px; text-align: center; line-height: 24px; color: #333; }
.ribbon-right { height: 109px; flex: none; overflow: hidden; }
.rg-clip { width: 105px; }
.rg-img { width: 151px; }
.rg-tools { width: 80px; }
.rg-brush { width: 53px; }
.rg-shape { width: 145px; }
.rg-shape::after { display: none; }
.ribbon-right .gbody { height: 89px; }
.rw-paste { width: 50px; padding-top: 9px; }
.rw-paste .ic-paste { margin-bottom: 5px; }
.stack-text { display: flex; flex-direction: column; gap: 4px; padding-top: 7px; }
.rw-select { width: 48px; padding-top: 13px; }
.rw-select .dash { height: 24px; margin-bottom: 8px; }
.rtools-body { padding: 20px 0 0 3px; }
.a-on { width: 22px; height: 22px; background: #cce4f7; border: 1px solid #62a2e4; display: flex; align-items: center; justify-content: center; margin-top: -2px; }
.a-on .ic-tool { width: 18px; height: 16px; }
.rw-brush { width: 50px; padding-top: 9px; }
.rw-brush .ic-brush { margin-bottom: 3px; }
.rshape-body { padding: 8px 0 0 5px; }
.gallery { display: grid; grid-template-columns: repeat(7, 20px); grid-auto-rows: 20px; width: 145px; height: 62px; background: #fff; border: 1px solid #dfe2e6; padding: 1px 0 0 1px; flex: none; }
.gallery svg { width: 18px; height: 18px; margin: 1px; fill: #fff; stroke: #1d6fb0; stroke-width: 1; }
.rshape-label { padding-left: 82px; }
.work-right { flex: 1; min-height: 0; background: linear-gradient(#c9d3e4, #dfe8f4); padding: 6px 0 0 5px; }
.canvas-wrap { position: relative; display: flex; width: 496px; height: 462px; box-shadow: 8px 8px 4px -1px #b7c3d7; }
.canvas-r { width: 487px; height: 462px; background: #000; padding: 9px 0 0 9px; display: flex; gap: 10px; overflow: hidden; flex: none; }
.col-r { width: 110px; flex: none; display: flex; flex-direction: column; gap: 10px; }
.mt { border-radius: 5px; flex: none; }
.h57 { height: 57px; } .h70 { height: 70px; } .h58 { height: 58px; } .h125 { height: 125px; } .h80 { height: 80px; } .h110 { height: 110px; } .h103 { height: 103px; } .h310 { height: 310px; }
.m-pink { background: #e61299; } .m-salmon { background: #e98a70; } .m-lgreen { background: #70d47c; } .m-purple { background: #897bc8; } .m-indigo { background: #4a51a4; }
.m-sea { background: #36b398; } .m-ice { background: #dce9f0; } .m-moss { background: #5b6f2d; } .m-cream { background: #f8e3aa; } .m-aqua { background: #9ddfe5; }
.redbox { position: absolute; border: 4px solid #ed1c24; }
.box-a { left: 8px; top: 98px; width: 134px; height: 160px; }
.box-b { left: 316px; top: 241px; width: 173px; height: 213px; }
.note { position: absolute; margin: 0; left: 107px; top: 291px; color: #ed1c24; font-size: 18px; line-height: 33.5px; white-space: nowrap; }
.vs-r { width: 9px; height: 462px; background: #fff; position: relative; flex: none; }
.vs-thumb { position: absolute; left: 1px; top: 9px; width: 7px; height: 430px; background: #bdbdbd; }
.handle { position: absolute; width: 5px; height: 5px; background: #fff; border: 1px solid #555; }
.h-r { left: 496px; top: 229px; }
.h-b { left: 246px; top: 462px; }
.h-c { left: 496px; top: 462px; }
.status { height: 26px; flex: none; display: flex; background: #f0f0f0; border-top: 1px solid #d8dbe0; }
.st { display: flex; align-items: center; gap: 7px; border-right: 1px solid #dcdcdc; padding-left: 3px; }
.st-1 { width: 177px; }
.st-2 { width: 178px; padding-left: 5px; }
.st-3 { flex: 1; border-right: 0; color: #222; padding-left: 4px; }
.st-text { word-spacing: 1px; }
.st-ic { width: 14px; height: 14px; flex: none; }
```
